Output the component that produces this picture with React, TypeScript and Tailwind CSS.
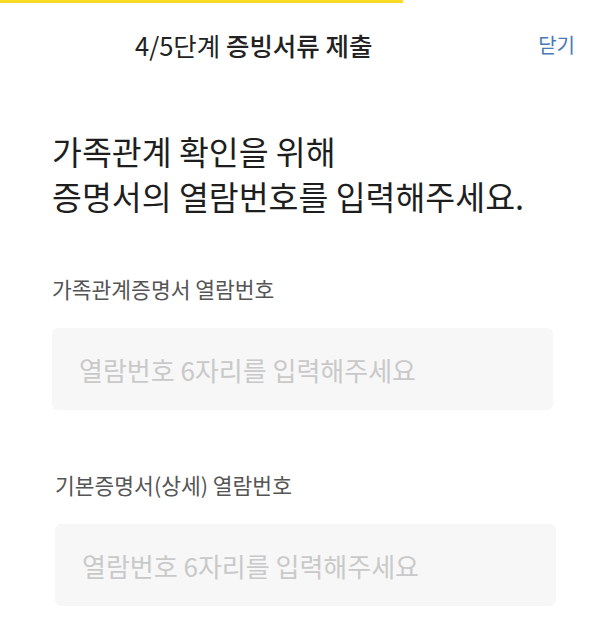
const FONT = '"Noto Sans CJK KR", "Noto Sans", sans-serif';

function NumberField({ label, className }: { label: string; className?: string }) {
  return (
    <div className={className}>
      <label className="block text-[21.5px] leading-[28px] text-[#555555]">{label}</label>
      <input
        type="text"
        inputMode="numeric"
        placeholder="열람번호 6자리를 입력해주세요"
        className="mt-[25px] block w-[501px] h-[82px] rounded-[6px] bg-[#f7f7f7] px-[27px] text-[26px] text-[#222] outline-none placeholder:text-[#c9c9c9]"
        style={{ fontFamily: FONT }}
      />
    </div>
  );
}

export default function App() {
  return (
    <div className="w-[600px] h-[622px] bg-white overflow-hidden" style={{ fontFamily: FONT }}>
      {/* 진행 표시줄 */}
      <div className="h-[3px] w-[403px] bg-[#fcd923]" />

      <header className="flex items-center h-[84px] pl-[135px] pr-[25px]">
        <h1 className="flex-1 text-[25.5px] text-[#222222]">
          <span>4/5단계</span> <span className="font-medium">증빙서류 제출</span>
        </h1>
        <button className="text-[20px] text-[#4a79b9]">닫기</button>
      </header>

      <main className="pl-[52px]">
        <h2 className="mt-[41px] text-[32.5px] leading-[45px] text-[#1e1e1e]">
          가족관계 확인을 위해
          <br />
          증명서의 열람번호를 입력해주세요.
        </h2>

        <NumberField label="가족관계증명서 열람번호" className="mt-[57px]" />
        <NumberField label="기본증명서(상세) 열람번호" className="mt-[61px] ml-[3px]" />
      </main>
    </div>
  );
}
